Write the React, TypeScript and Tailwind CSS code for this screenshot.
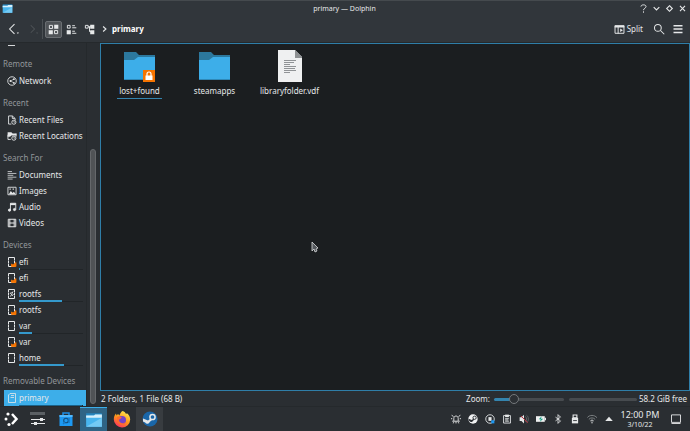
import { ReactNode } from 'react';
import clsx from 'clsx';

interface IconProps {
  children: ReactNode;
  className?: string;
  viewBox?: string;
}

function Icon({ children, className = 'size-3', viewBox = '0 0 16 16' }: IconProps) {
  return (
    <svg
      className={clsx('shrink-0', className)}
      viewBox={viewBox}
      fill="none"
      stroke="currentColor"
      strokeWidth="1.4"
      aria-hidden="true"
    >
      {children}
    </svg>
  );
}

function FolderIcon({ locked = false }: { locked?: boolean }) {
  return (
    <Icon className="size-8" viewBox="0 0 32 32">
      <g stroke="none">
        <path d="M0 2h12l3 3h16v11H0z" fill="#2c789d" />
        <path d="M0 10h10l4-3h17v23H0z" fill="#3daee9" />
        <path d="M0 29h31v1H0z" fill="#2f89b8" />
        {locked && (
          <>
            <path d="M19 20h12v12H19z" fill="#f67400" />
            <path d="M21.500 25.500h7V30h-7z" fill="#fff" />
            <path d="M23 26v-2a2 2 0 0 1 4 0v2" stroke="#fff" strokeWidth="1.200" />
          </>
        )}
      </g>
    </Icon>
  );
}

function TextFileIcon() {
  return (
    <Icon className="size-8" viewBox="0 0 32 32">
      <g stroke="none">
        <path d="M4 0h17l7 7v25H4z" fill="#eff0f1" />
        <path d="M21 0l7 7v1h-7z" fill="#8e9193" />
      </g>
      <path
        d="M10 10.500h12M10 12.500h10M10 14.500h6M10 16.500h12M10 18.500h11M10 20.500h12M10 22.500h6"
        stroke="#85888b"
        strokeWidth="0.900"
      />
    </Icon>
  );
}

function SmallFolderIcon({ className }: { className: string }) {
  return (
    <Icon className={className}>
      <g stroke="none">
        <path d="M1 2h14v5H1z" fill="#2584bd" />
        <path d="M1 4h7l1-1h6v11H1z" fill="#48b5ee" />
        <path d="M1 4h7l1-1h6v3H1z" fill="#d5effb" />
        <path d="M1 14l14-8v8z" fill="#74caf4" />
      </g>
    </Icon>
  );
}

function NetworkIcon() {
  return (
    <Icon className="size-2.5">
      <circle cx="8" cy="8" r="6.800" />
      <path d="M11 5L5.500 8l5.500 3" strokeWidth="1" />
      <g fill="currentColor" stroke="none">
        <circle cx="11" cy="5" r="1.500" />
        <circle cx="5.500" cy="8" r="1.500" />
        <circle cx="11" cy="11" r="1.500" />
      </g>
    </Icon>
  );
}

function RecentFilesIcon() {
  return (
    <Icon className="size-2.5">
      <path d="M7 14.500H2.500v-13h6l4.500 4V8M8.500 1.500v4h4" />
      <circle cx="11" cy="11.500" r="3.300" />
      <path d="M11 9.500v2h2" strokeWidth="1" />
    </Icon>
  );
}

function RecentLocationsIcon() {
  return (
    <Icon className="size-2.5">
      <path d="M1 2h6l2 2h6v3H7L5 9H1z" fill="currentColor" stroke="none" />
      <path d="M1.500 6v7.500H6M14.500 4v5" />
      <circle cx="11" cy="11.500" r="3.300" />
      <path d="M11 9.500v2h2" strokeWidth="1" />
    </Icon>
  );
}

function DocumentsIcon() {
  return (
    <Icon className="size-2.5">
      <path d="M1 2.500h7M1 5.500h14M1 8.500h9M1 11.500h14M1 14.500h8" strokeWidth="1.200" />
    </Icon>
  );
}

function ImagesIcon() {
  return (
    <Icon className="size-2.5">
      <path d="M1.500 2h13v12h-13z" />
      <path d="M3 13l3-5 3 3 2-2 3 4zM9 4h2v2H9zM4 4h2v2H4z" fill="currentColor" stroke="none" />
    </Icon>
  );
}

function AudioIcon() {
  return (
    <Icon className="size-2.5">
      <path d="M5.500 13V2h8.500v10" />
      <path d="M5 2h9v3H5z" fill="currentColor" stroke="none" />
      <circle cx="4" cy="13" r="1.800" fill="currentColor" />
      <circle cx="12" cy="12" r="1.800" fill="currentColor" />
    </Icon>
  );
}

function VideosIcon() {
  return (
    <Icon className="size-2.5">
      <path d="M2 2h12v12H2zM4.500 2v12M11.500 2v12M4 8h8" strokeWidth="1.600" />
    </Icon>
  );
}

// Drawn on a 10px grid so that the frame stays crisp
function DriveIcon({ locked = false, root = false }) {
  return (
    <Icon className="size-2.5" viewBox="0 0 10 10">
      <path d="M1.500.5h6v9h-6z" strokeWidth="1" />
      <path d="M1 3.500h1M1 6.500h1M7 3.500h1M7 6.500h1" stroke="#7b7f83" strokeWidth="0.800" />
      {root && <path d="M3.500 7.500l2.500-5M3 5l1.500-2M5 7l1.500-2" strokeWidth="0.900" />}
      {locked && <path d="M4.500 7l1.500 1 3-2.500V9.500H4.500z" fill="#f67400" stroke="#f67400" strokeWidth="0.800" />}
    </Icon>
  );
}

function RemovableIcon() {
  return (
    <Icon className="size-2.5" viewBox="0 0 10 10">
      <path d="M3 .5h5.500v9h-7V2zM4 2.500h3M3.500 4.500h3.500" strokeWidth="0.800" />
    </Icon>
  );
}

interface Place {
  label: string;
  icon: ReactNode;
  // Used space, in percent
  usage?: number;
  selected?: boolean;
}

const sections: { title: string; places: Place[] }[] = [
  { title: 'Remote', places: [{ label: 'Network', icon: <NetworkIcon /> }] },
  {
    title: 'Recent',
    places: [
      { label: 'Recent Files', icon: <RecentFilesIcon /> },
      { label: 'Recent Locations', icon: <RecentLocationsIcon /> },
    ],
  },
  {
    title: 'Search For',
    places: [
      { label: 'Documents', icon: <DocumentsIcon /> },
      { label: 'Images', icon: <ImagesIcon /> },
      { label: 'Audio', icon: <AudioIcon /> },
      { label: 'Videos', icon: <VideosIcon /> },
    ],
  },
  {
    title: 'Devices',
    places: [
      { label: 'efi', icon: <DriveIcon locked />, usage: 2 },
      { label: 'efi', icon: <DriveIcon locked /> },
      { label: 'rootfs', icon: <DriveIcon root />, usage: 67 },
      { label: 'rootfs', icon: <DriveIcon locked /> },
      { label: 'var', icon: <DriveIcon />, usage: 20 },
      { label: 'var', icon: <DriveIcon locked /> },
      { label: 'home', icon: <DriveIcon />, usage: 71 },
    ],
  },
  {
    title: 'Removable Devices',
    places: [{ label: 'primary', icon: <RemovableIcon />, usage: 98, selected: true }],
  },
];

function PlaceRow({ label, icon, usage, selected }: Place) {
  return (
    <li className={clsx('ml-1 flex h-4', selected && 'bg-[#3daee9]')}>
      <button className="flex flex-1 items-center gap-0.5 pr-[3px] pl-[3px] text-left">
        {icon}
        <span className="relative flex h-4 flex-1 items-center whitespace-nowrap">
          {label}
          {usage !== undefined && (
            <span className="absolute inset-x-0 bottom-0 flex h-0.5 items-end">
              <span
                className={clsx('block', selected ? 'h-px bg-[#1b6289]' : 'h-0.5 bg-[#3499cc]')}
                style={{ width: `${usage}%` }}
              />
              <span className="h-px flex-1 bg-[#212528]" />
            </span>
          )}
        </span>
      </button>
    </li>
  );
}

function Sidebar() {
  return (
    <aside className="flex w-[100px] shrink-0 bg-[#2a2e32]">
      <nav className="flex w-[86px] flex-col" aria-label="Places">
        <div className="h-[7px] pt-0.5 pl-2">
          <div className="h-px w-[7px] bg-[#d5d7d9]" />
        </div>
        {sections.map(({ title, places }) => (
          <section key={title} className="last:mt-auto">
            <h2 className="flex h-[23px] items-end pb-px pl-[3px] leading-4 whitespace-nowrap text-[#92969a]">
              {title}
            </h2>
            <ul>
              {places.map((place, i) => (
                <PlaceRow key={i} {...place} />
              ))}
            </ul>
          </section>
        ))}
      </nav>
      <div className="flex flex-1 flex-col border-l border-[#25292c] pt-[106px] pb-0.5 pl-[3px]">
        <div className="w-1.5 flex-1 rounded-full border border-[#65686b] bg-[#505356]" />
      </div>
    </aside>
  );
}

function TitleBar() {
  return (
    <header className="flex h-4 items-center border-t border-[#454a4e] bg-[#31363b] pr-px pl-0.5">
      <div className="w-[50px]">
        <SmallFolderIcon className="size-[11px]" />
      </div>
      <h1 className="flex-1 text-center text-[7px]">primary — Dolphin</h1>
      <div className="flex w-[52px]">
        <button className="flex w-[13px] justify-center" aria-label="Help">
          <Icon className="size-[9px]">
            <path d="M3.500 4.500c0-4 9-4 9 0 0 3-4.500 3-4.500 6.500M8 13v2.500" strokeWidth="1.700" />
          </Icon>
        </button>
        <button className="flex w-[13px] justify-center" aria-label="Minimize">
          <Icon className="size-[9px]">
            <path d="M3 5.500l5 5 5-5" strokeWidth="2" />
          </Icon>
        </button>
        <button className="flex w-[13px] justify-center" aria-label="Restore">
          <Icon className="size-[9px]">
            <path d="M8 3l5 5-5 5-5-5z" strokeWidth="2" />
          </Icon>
        </button>
        <button className="flex w-[13px] justify-center" aria-label="Close">
          <Icon className="size-[9px]">
            <path d="M3.500 3.500l9 9M12.500 3.500l-9 9" strokeWidth="2" />
          </Icon>
        </button>
      </div>
    </header>
  );
}

function Toolbar() {
  return (
    <div className="flex h-[27px] items-center border-b border-[#25292c] bg-[#31363b] pr-1.5 pl-[7px]">
      <button className="w-[23px]" aria-label="Back">
        <Icon>
          <path d="M10 1.500L3.500 8l6.500 6.500" />
          <path d="M13 12.500h3l-1.500 2z" fill="currentColor" stroke="none" />
        </Icon>
      </button>
      <button className="w-3 text-[#4d5256]" aria-label="Forward" disabled>
        <Icon>
          <path d="M1 3l5 5-5 5" />
          <path d="M8 12.500h3l-1.500 2z" fill="currentColor" stroke="none" />
        </Icon>
      </button>
      <div className="mr-0.5 h-5 w-px bg-[#4b5054]" />
      <button
        className="flex size-[17px] items-center justify-center rounded-xs border border-[#6b6f73] bg-[#505458]"
        aria-label="Icons"
        aria-pressed="true"
      >
        <Icon className="size-[11px]">
          <path d="M2 2h4.500v4.500H2zM9.500 9.500H14V14H9.500z" />
          <path d="M9 1h6v6H9zM1 9h6v6H1z" fill="currentColor" stroke="none" />
        </Icon>
      </button>
      <button className="ml-px flex size-4 items-center justify-center" aria-label="Compact">
        <Icon className="size-[11px]">
          <path d="M2 2h4v4H2zM9 2.500h4M9 5.500h6M9 10.500h4M9 13.500h6" />
          <path d="M1 9h6v6H1z" fill="currentColor" stroke="none" />
        </Icon>
      </button>
      <button className="ml-0.5 flex size-4 items-center justify-center" aria-label="Details">
        <Icon className="size-[11px]">
          <path d="M2 2h4v4H2zM6 4h4M8 4v7h2" />
          <path d="M9 1h6v6H9zM9 9h6v6H9z" fill="currentColor" stroke="none" />
        </Icon>
      </button>
      <nav className="ml-[3px] flex flex-1 items-center gap-0.5" aria-label="Location">
        <Icon className="size-2.5">
          <path d="M5 4l4.500 4L5 12" strokeWidth="1.800" />
        </Icon>
        <a href="#primary" className="font-bold text-white">
          primary
        </a>
      </nav>
      <button className="mr-2.5 flex items-center gap-0.5">
        <Icon className="size-[11px]">
          <path d="M1.500 2.500h13v11h-13zM6 3v11" />
          <path d="M1 2h14v3H1zM9 6.500l4 2.500-4 2.500z" fill="currentColor" stroke="none" />
        </Icon>
        Split
      </button>
      <button className="mr-[7px]" aria-label="Search">
        <Icon>
          <circle cx="6.500" cy="6.500" r="4.500" />
          <path d="M10 10l5 5" />
        </Icon>
      </button>
      <button aria-label="Menu">
        <Icon>
          <path d="M2 3.500h12M2 8h12M2 12.500h12" strokeWidth="2" />
        </Icon>
      </button>
    </div>
  );
}

const files = [
  { name: 'lost+found', icon: <FolderIcon locked />, current: true },
  { name: 'steamapps', icon: <FolderIcon /> },
  { name: 'libraryfolder.vdf', icon: <TextFileIcon /> },
];

function FileView() {
  return (
    <main className="relative flex-1 border border-[#2f7ea8] bg-[#1b1e20] pt-1.5 pl-px">
      <ul className="flex flex-wrap">
        {files.map(({ name, icon, current }) => (
          <li key={name} className="flex w-[75px] flex-col items-center gap-0.5">
            {icon}
            <span
              className={clsx(
                'border-b px-0.5 leading-[14px]',
                current ? 'border-[#3484ae]' : 'border-transparent'
              )}
            >
              {name}
            </span>
          </li>
        ))}
      </ul>
      <svg className="absolute top-[197px] left-[210px] h-3 w-2" viewBox="0 0 8 12" aria-hidden="true">
        <path d="M1 1v9l2-2 1 3 2-1-1-2 2-1z" fill="#565a5e" stroke="#d8dadc" strokeWidth="0.800" />
      </svg>
    </main>
  );
}

function StatusBar() {
  return (
    <footer className="flex h-[15px] items-center bg-[#2a2e32] pt-px pr-[3px] pl-px">
      <span className="flex-1">2 Folders, 1 File (68 B)</span>
      <label htmlFor="zoom" className="mr-1">
        Zoom:
      </label>
      <input
        id="zoom"
        type="range"
        min="0"
        max="16"
        defaultValue="4"
        className="mr-[5px] h-[3px] w-[70px] appearance-none rounded-full bg-[linear-gradient(to_right,#3484ae_28%,#474b4f_28%)] [&::-webkit-slider-thumb]:size-2.5 [&::-webkit-slider-thumb]:appearance-none [&::-webkit-slider-thumb]:rounded-full [&::-webkit-slider-thumb]:border [&::-webkit-slider-thumb]:border-[#74787b] [&::-webkit-slider-thumb]:bg-[#2c3034]"
      />
      <div className="mr-0.5 h-[3px] w-[68px] rounded-full bg-[#474b4f]" />
      <span>58.2 GiB free</span>
    </footer>
  );
}

function FirefoxIcon() {
  return (
    <Icon className="size-[18px]" viewBox="0 0 18 18">
      <defs>
        <linearGradient id="fox" x1="0.800" y1="0.100" x2="0.300" y2="1">
          <stop offset="0" stopColor="#ffe14d" />
          <stop offset="0.500" stopColor="#ff9418" />
          <stop offset="1" stopColor="#ff2f62" />
        </linearGradient>
      </defs>
      <g stroke="none">
        <path
          d="M9.500 1c2 .6 3.200 2 3.500 3l1-.7c2 1.500 3.200 3.800 3.200 6.200A8.200 8.200 0 0 1 9 17.500 8.200 8.200 0 0 1 .8 9.300C.8 6.500 2 4.500 3 3.500l.5 2L5 4l1.500 1.500C7 3.500 8 2 9.500 1z"
          fill="url(#fox)"
        />
        <circle cx="9" cy="10" r="4" fill="#7542c8" />
        <path d="M4 7c2-1 3 0 5 .5-1 1.500-2.500 1.300-3 2.500 0 3 4 4.500 6.500 2C11 16 4 15 4 10z" fill="#ff6b2c" />
      </g>
    </Icon>
  );
}

function SteamGlyph() {
  return (
    <>
      <circle cx="10.500" cy="6" r="2.600" strokeWidth="1.500" />
      <path d="M1 7.500l5 2 2.500-2 1.500 1.500-2.300 2a2.400 2.400 0 0 1-4.500.5L1 10.500z" fill="currentColor" stroke="none" />
    </>
  );
}

const tasks = [
  {
    label: 'System Settings',
    icon: (
      <Icon className="size-4">
        <path d="M0 1h15v3H0z" fill="#5b6064" stroke="none" />
        <path d="M1 8.500h14M1 12.500h14" strokeWidth="1" />
        <path d="M10 7h3v3h-3zM4 11h3v3H4z" fill="currentColor" stroke="none" />
      </Icon>
    ),
  },
  {
    label: 'Discover',
    icon: (
      <Icon className="size-4">
        <path d="M5 4V2h6v2" stroke="#1d8fe8" strokeWidth="1.500" />
        <path d="M1.500 4h13v11h-13z" fill="#1d99f3" stroke="none" />
        <path d="M1.500 4h13v2h-13z" fill="#52b7fa" stroke="none" />
        <circle cx="8" cy="9.500" r="2.300" stroke="#14507f" strokeWidth="1.100" />
        <path d="M5 13l2-2M11 7v5" stroke="#1577c5" />
      </Icon>
    ),
  },
  { label: 'Dolphin', icon: <SmallFolderIcon className="size-[18px]" />, style: 'border-t border-[#3daee9] bg-[#2f6485]' },
  { label: 'Firefox', icon: <FirefoxIcon /> },
  {
    label: 'Steam',
    icon: (
      <Icon className="size-4">
        <circle cx="8" cy="8" r="7.500" fill="#1a66a8" stroke="none" />
        <SteamGlyph />
      </Icon>
    ),
    style: 'bg-[#383c40]',
  },
];

const trayItems = [
  {
    label: 'Notifications',
    icon: (
      <>
        <path d="M4.500 11V7c0-5 7-5 7 0v4M2 11.500h12M8 12v3" strokeWidth="1.500" />
        <path d="M1 2l3 2M15 2l-3 2M0 7.500h2M14 7.500h2M3 14.500l2-1M13 14.500l-2-1" strokeWidth="1.500" />
      </>
    ),
  },
  {
    label: 'Steam',
    icon: (
      <>
        <circle cx="8" cy="8" r="7.500" fill="#eff0f1" stroke="none" />
        <g color="#2a2e32">
          <SteamGlyph />
        </g>
      </>
    ),
  },
  {
    label: 'Updates',
    icon: (
      <>
        <circle cx="8" cy="8" r="6.800" />
        <path d="M5.500 5h5v6h-5z" fill="currentColor" stroke="none" />
        <path d="M10 10h5v5h-5z" fill="#1d99f3" stroke="none" />
      </>
    ),
  },
  {
    label: 'Clipboard',
    icon: (
      <>
        <path d="M2.500 2.500h11v12h-11zM5 7.500h6M5 9.500h5M5 11.500h6" />
        <path d="M5 1h6v4H5z" fill="currentColor" stroke="none" />
      </>
    ),
  },
  {
    label: 'Volume',
    icon: (
      <>
        <path d="M1 5h3l4-4v14l-4-4H1z" fill="currentColor" stroke="none" />
        <path d="M10 4c3 1 3 7 0 8M12 2c4 2 4 10 0 12" stroke="#63676a" />
        <path d="M3 3l11 11" stroke="#b8323f" strokeWidth="1.600" />
      </>
    ),
  },
  {
    label: 'Battery',
    icon: (
      <>
        <path d="M0 3.500h14v9H0z" fill="#eff0f1" stroke="none" />
        <path d="M15 6v4" strokeWidth="2" />
        <path d="M9 3.500L4.500 8.500h3l-1 4 5-5H8z" fill="#16a085" stroke="none" />
      </>
    ),
  },
  { label: 'Bluetooth', icon: <path d="M4 5l8 6-4 4V1l4 4-8 6" /> },
  {
    label: 'Removable devices',
    icon: (
      <>
        <path d="M5 1.500h6V6H5z" strokeWidth="1.800" />
        <path d="M3 6h10v9H3z" fill="currentColor" stroke="none" />
        <path d="M5 10.500h6" stroke="#2a2e32" />
      </>
    ),
  },
  {
    label: 'Wi-Fi',
    icon: (
      <>
        <path d="M0 6c4-5 12-5 16 0M3 8.500c3-3 7-3 10 0" stroke="#85898c" />
        <path d="M5.500 11c2-1.500 3-1.500 5 0M8 12v3" strokeWidth="1.600" />
      </>
    ),
  },
  { label: 'Show hidden icons', icon: <path d="M2 11l6-6.500 6 6.500z" fill="currentColor" stroke="none" /> },
];

function Taskbar() {
  return (
    <div className="flex h-[25px] shrink-0 items-center border-t border-[#25292c] bg-[#2a2e32] pr-[5px]">
      <button className="flex w-6 justify-center text-white" aria-label="Application Launcher">
        <Icon className="size-4">
          <path d="M8 3l4.500 5L8 13" strokeWidth="2.500" />
          <g fill="currentColor" stroke="none">
            <circle cx="4" cy="3" r="1.600" />
            <circle cx="2" cy="8" r="1.500" />
            <circle cx="5" cy="13.500" r="1.600" />
          </g>
        </Icon>
      </button>
      <div className="flex flex-1 gap-px self-stretch">
        {tasks.map(({ label, icon, style }) => (
          <button key={label} className={clsx('flex w-[27px] items-center justify-center', style)} aria-label={label}>
            {icon}
          </button>
        ))}
      </div>
      {trayItems.map(({ label, icon }) => (
        <button key={label} className="flex w-[17px] justify-center" aria-label={label}>
          <Icon className="size-2.5">{icon}</Icon>
        </button>
      ))}
      <time className="mr-[7px] ml-[3px] flex w-10 flex-col pt-px text-center whitespace-nowrap" dateTime="2022-03-10T12:00">
        <span className="text-[9px] leading-[10px]">12:00 PM</span>
        <span className="text-[7px] leading-[10px]">3/10/22</span>
      </time>
      <button className="flex w-[18px] justify-center" aria-label="Show Desktop">
        <Icon>
          <path d="M2 2.500h12v10H2zM2 14h12" strokeWidth="1.200" />
        </Icon>
      </button>
    </div>
  );
}

export default function App() {
  return (
    <div className="flex min-h-screen flex-col bg-[#2a2e32] font-['Noto_Sans',sans-serif] text-[8px] leading-3 text-[#e6e8e9]">
      <TitleBar />
      <Toolbar />
      <div className="flex flex-1">
        <Sidebar />
        <div className="flex min-w-0 flex-1 flex-col">
          <FileView />
          <StatusBar />
        </div>
      </div>
      <Taskbar />
    </div>
  );
}
